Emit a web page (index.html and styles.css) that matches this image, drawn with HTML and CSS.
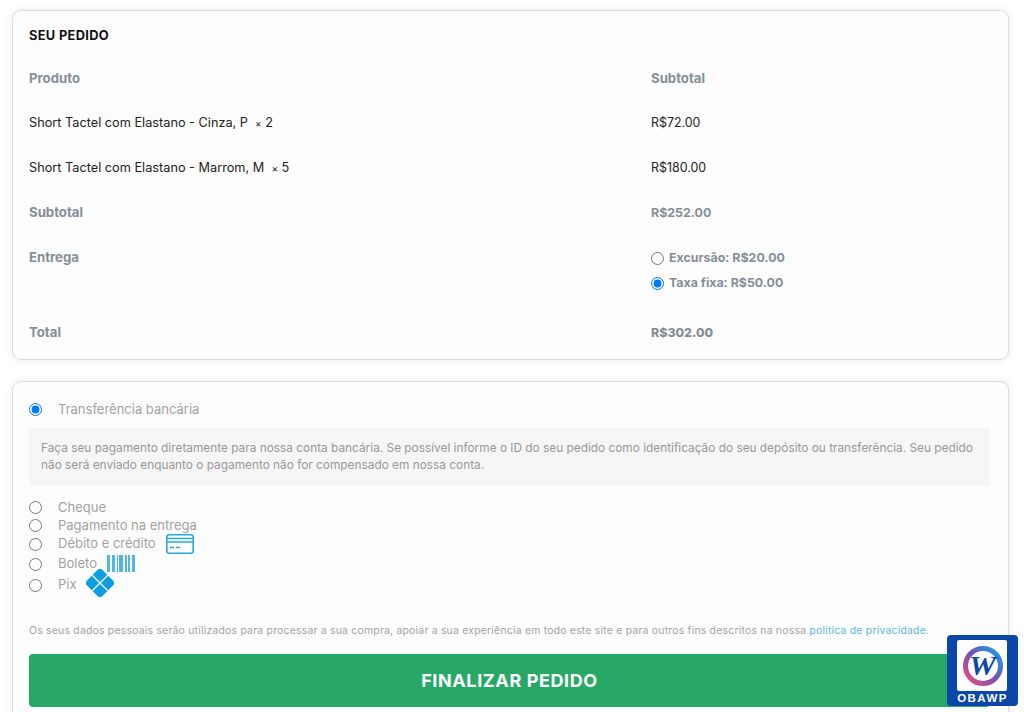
FILE: index.html
```html
<!DOCTYPE html>
<html lang="pt-BR">
<head>
<meta charset="utf-8">
<title>Seu pedido</title>
<link rel="stylesheet" href="styles.css">
</head>
<body>
<section class="card order">
  <h2 class="title">SEU PEDIDO</h2>
  <div class="row head"><span>Produto</span><span>Subtotal</span></div>
  <div class="row item"><span>Short Tactel com Elastano - Cinza, P&nbsp; <small>×</small> 2</span><span class="money">R$72.00</span></div>
  <div class="row item"><span>Short Tactel com Elastano - Marrom, M&nbsp; <small>×</small> 5</span><span class="money">R$180.00</span></div>
  <div class="row head"><span>Subtotal</span><span class="money">R$252.00</span></div>
  <div class="row head ship">
    <span>Entrega</span>
    <div class="ship-list">
      <label class="ship-opt"><input type="radio" name="ship"><span>Excursão: R$20.00</span></label>
      <label class="ship-opt"><input type="radio" name="ship" checked><span>Taxa fixa: R$50.00</span></label>
    </div>
  </div>
  <div class="row head total"><span>Total</span><strong class="money">R$302.00</strong></div>
</section>

<section class="card pay">
  <label class="pay-opt"><input type="radio" name="pay" checked><span>Transferência bancária</span></label>
  <p class="pay-box">Faça seu pagamento diretamente para nossa conta bancária. Se possível informe o ID do seu pedido como identificação do seu depósito ou transferência. Seu pedido não será enviado enquanto o pagamento não for compensado em nossa conta.</p>
  <div class="pay-list">
    <label class="pay-opt"><input type="radio" name="pay"><span>Cheque</span></label>
    <label class="pay-opt"><input type="radio" name="pay"><span>Pagamento na entrega</span></label>
    <label class="pay-opt card-line"><input type="radio" name="pay"><span>Débito e crédito</span>
      <svg class="ic-card" viewBox="0 0 28 20" width="28" height="20" fill="none" stroke="#29abe2" stroke-width="1.600"><rect x=".8" y=".8" width="26.400" height="18.400" rx="2.500"/><path d="M1 4.500h26M1 8h26M4 13.500h4M10 13.500h4"/></svg>
    </label>
    <label class="pay-opt bar-line"><input type="radio" name="pay"><span>Boleto</span>
      <svg class="ic-bar" viewBox="0 0 28 17" width="28" height="17" fill="#4db6ea"><path d="M0 0h3v17H0zM5 0h3v17H5zM10 0h1v17h-1zM12 0h4v17h-4zM18 0h2v17h-2zM21 0h2v17h-2zM25 0h3v17h-3z"/></svg>
    </label>
    <label class="pay-opt pix-line"><input type="radio" name="pay"><span>Pix</span>
      <svg class="ic-pix" viewBox="0 0 28 28" width="28" height="28"><g transform="rotate(45 14 14)"><rect x="3" y="3" width="22" height="22" rx="4" fill="#0d9de0"/><path d="M14 3v22M3 14h22" stroke="#fff" stroke-width="1.300"/></g></svg>
    </label>
  </div>
  <p class="privacy">Os seus dados pessoais serão utilizados para processar a sua compra, apoiar a sua experiência em todo este site e para outros fins descritos na nossa <a href="#">política de privacidade</a>.</p>
  <button class="submit" type="button">FINALIZAR PEDIDO</button>
</section>

<aside class="badge">
  <div class="badge-logo">
    <svg viewBox="0 0 50 51" width="50" height="51" aria-hidden="true">
      <defs><linearGradient id="ring" x1="0" y1="1" x2="1" y2="0"><stop offset="0" stop-color="#f0507f"/><stop offset=".5" stop-color="#7a4fb0"/><stop offset="1" stop-color="#12a5e8"/></linearGradient></defs>
      <circle cx="26" cy="26" r="17.500" fill="#fff" stroke="url(#ring)" stroke-width="5"/>
      <text x="25.500" y="35" text-anchor="middle" textLength="27" lengthAdjust="spacingAndGlyphs" class="badge-w">W</text>
    </svg>
  </div>
  <div class="badge-name">OBAWP</div>
</aside>
</body>
</html>
```
FILE: styles.css
```css
* { box-sizing: border-box; }
html, body { height: 712px; overflow: hidden; }
body {
  margin: 0;
  padding: 10px 15px 0 12px;
  background: #fff;
  font-family: Inter, "Noto Sans", sans-serif;
  color: #1c1c1c;
}
.card {
  background: #fdfdfd;
  border: 1px solid #dcdcdc;
  border-radius: 9px;
  box-shadow: 0 0 8px rgba(0, 0, 0, .09);
  padding: 0 16px;
}
.order { height: 350px; margin-bottom: 21px; }
.title { margin: 0; padding-top: 17px; height: 44.300px; font-size: 12.800px; line-height: 15px; font-weight: 700; letter-spacing: .35px; color: #111; }
.row { display: grid; grid-template-columns: 622px 1fr; height: 44.800px; align-items: center; font-size: 12.720px; }
.head { font-weight: 700; color: #868e96; font-size: 13.200px; }
.money { font-size: 12.400px; }
.item { color: #222; }
.item small { font-size: 10px; }
.ship { align-items: start; height: 75.200px; padding-top: 15px; }
.ship-list { display: flex; flex-direction: column; gap: 9px; margin-top: -.3px; font-size: 12.400px; }
.ship-opt { display: flex; align-items: center; gap: 5px; height: 16px; }
.ship-opt input { margin: 2px 0 0; width: 13px; height: 13px; }
.total strong { font-weight: 800; }
.pay { height: 360px; padding: 18px 18px 0 16px; }
.pay-opt { display: flex; align-items: center; height: 18px; font-size: 13px; color: #a2a2a2; }
.pay-opt input { margin: 0 16px 0 0; width: 13px; height: 13px; }
.pay-box { margin: 10px 0 12px; padding: 12px 12px 0; height: 58px; background: #f6f6f6; color: #989898; font-size: 11.850px; line-height: 17px; }
.pay-list { display: flex; flex-direction: column; }
.card-line input { margin-top: 2px; }
.bar-line { height: 21px; padding-top: 1px; }
.bar-line input { margin-top: 2px; }
.pix-line { height: 21px; }
.pix-line input { margin-top: 4px; }
.ic-card { margin: 1px 0 0 10px; }
.ic-bar { margin: 0 0 0 10px; }
.ic-pix { margin: -1px 0 0 9px; }
.privacy { margin: 30px 0 17px; font-size: 10.400px; line-height: 13px; letter-spacing: .23px; color: #a2a2a2; white-space: nowrap; }
.privacy a { color: #5bb8e0; text-decoration: none; }
.submit { display: block; width: 100%; height: 53px; border: 0; border-radius: 4px; background: #27a866; color: #fff; font: 700 18px Inter, sans-serif; letter-spacing: .6px; }
.badge { position: fixed; left: 947px; top: 635px; width: 71px; height: 71px; padding: 5px 0 0 10px; background: #0a47a8; border-radius: 4px; }
.badge-logo { width: 50px; height: 51px; background: #fff; border-radius: 2px; }
.badge-logo svg { display: block; }
.badge-w { font: italic 900 27px "Liberation Serif", serif; fill: #0a47a8; }
.badge-name { margin-top: 1px; width: 51px; text-align: center; font: 700 11.500px/13px "Liberation Sans", sans-serif; letter-spacing: 1.400px; color: #fff; white-space: nowrap; }
```
